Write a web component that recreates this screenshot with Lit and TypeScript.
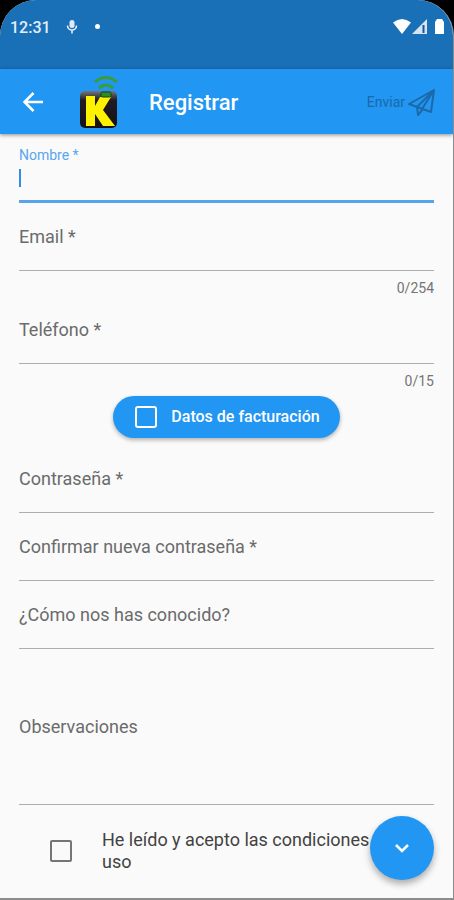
import { LitElement, html, css, nothing } from "lit";
import { customElement, property } from "lit/decorators.js";

@customElement("form-field")
class FormField extends LitElement {
  @property() label = "";
  @property() type = "text";
  @property() counter = "";
  @property({ type: Boolean }) active = false;
  @property({ type: Boolean }) multiline = false;

  static styles = css`
    :host {
      display: block;
    }
    .field {
      display: grid;
      box-sizing: border-box;
      height: 68px;
      border-bottom: 1px solid #adadad;
    }
    .field > * {
      grid-area: 1 / 1;
    }
    .label {
      padding-top: 22px;
      font-size: 18px;
      line-height: 24px;
      color: #6b6b6b;
      white-space: nowrap;
    }
    .input {
      box-sizing: border-box;
      width: 100%;
      min-width: 0;
      margin: 0;
      padding: 22px 0;
      border: 0;
      outline: 0;
      resize: none;
      background: transparent;
      font: inherit;
      font-size: 18px;
      line-height: 24px;
      color: #212121;
    }
    .tall {
      height: 156px;
    }
    .tall .label {
      padding-top: 66px;
    }
    .active {
      border-bottom: 3px solid #56a5ea;
    }
    .active .label {
      padding-top: 12px;
      font-size: 14px;
      line-height: 16px;
      color: #58a6ee;
    }
    .active .input {
      padding: 32px 0 12px;
      caret-color: transparent;
    }
    .caret {
      width: 2px;
      height: 18px;
      margin-top: 34px;
      background: #2f8fe0;
    }
    .counter {
      height: 25px;
      padding-top: 8px;
      box-sizing: border-box;
      text-align: right;
      font-size: 14px;
      line-height: 18px;
      color: #757575;
    }
  `;

  render() {
    return html`
      <div class="field ${this.active ? "active" : ""} ${this.multiline ? "tall" : ""}">
        <label class="label" for="control">${this.label}</label>
        ${this.multiline
          ? html`<textarea class="input" id="control"></textarea>`
          : html`<input class="input" id="control" type=${this.type} />`}
        ${this.active ? html`<span class="caret"></span>` : nothing}
      </div>
      ${this.counter ? html`<div class="counter">${this.counter}</div>` : nothing}
    `;
  }
}

@customElement("app-root")
class AppRoot extends LitElement {
  static styles = css`
    :host {
      display: block;
      background: #000;
      font-family: Roboto, "Liberation Sans", sans-serif;
    }
    .screen {
      position: relative;
      box-sizing: border-box;
      min-height: 100vh;
      overflow: hidden;
      border-right: 1px solid #8c8c8c;
      border-bottom: 2px solid #8c8c8c;
      border-radius: 36px 36px 0 0;
      background: #fafafa;
    }
    .status {
      display: flex;
      align-items: flex-start;
      box-sizing: border-box;
      height: 69px;
      padding: 17px 8px 0 10px;
      background: #1a70b7;
      color: #e4eef7;
    }
    .time {
      font-size: 16px;
      line-height: 22px;
      font-weight: 500;
    }
    .mic {
      margin: 3px 0 0 14px;
    }
    .dot {
      width: 5px;
      height: 5px;
      margin: 7px 0 0 16px;
      border-radius: 50%;
      background: #fff;
    }
    .signals {
      margin: 1px 0 0 auto;
    }
    .bar {
      position: relative;
      display: flex;
      align-items: center;
      box-sizing: border-box;
      height: 65px;
      padding: 0 16px 0 19px;
      background: #2196f3;
      box-shadow: 0 1px 4px rgba(0, 0, 0, 0.45);
      color: #fff;
    }
    svg {
      display: block;
      flex: none;
    }
    button {
      margin: 0;
      padding: 0;
      border: 0;
      background: none;
      font: inherit;
      color: inherit;
    }
    .logo {
      margin-left: 30px;
    }
    .title {
      margin: 0 auto 0 30px;
      padding-top: 2px;
      font-size: 22px;
      line-height: 28px;
      font-weight: 500;
    }
    .send {
      display: flex;
      align-items: center;
      gap: 2px;
      font-size: 14px;
      line-height: 18px;
      color: #1b69a8;
    }
    .form {
      padding: 1px 19px 0;
    }
    .billing {
      display: flex;
      align-items: center;
      gap: 14px;
      width: fit-content;
      height: 42px;
      margin: 7px auto;
      padding: 0 20px 0 22px;
      border-radius: 21px;
      background: #2196f3;
      box-shadow: 0 2px 4px rgba(0, 0, 0, 0.3);
      color: #fff;
      font-size: 16px;
      line-height: 22px;
      font-weight: 500;
    }
    input[type="checkbox"] {
      appearance: none;
      flex: none;
      box-sizing: border-box;
      width: 22px;
      height: 22px;
      margin: 0;
      border: 2px solid #fff;
      border-radius: 3px;
    }
    .terms {
      display: flex;
      align-items: center;
      gap: 30px;
      padding: 24px 20px 24px 31px;
      color: #424242;
      font-size: 18px;
      line-height: 22px;
    }
    .terms input[type="checkbox"] {
      border-color: #757575;
      border-radius: 2px;
    }
    .fab {
      position: absolute;
      right: 19px;
      bottom: 18px;
      display: grid;
      place-items: center;
      width: 64px;
      height: 64px;
      border-radius: 50%;
      background: #2196f3;
      box-shadow: 0 4px 7px rgba(0, 0, 0, 0.32);
      color: #fff;
    }
  `;

  render() {
    return html`
      <div class="screen">
        <div class="status">
          <span class="time">12:31</span>
          <svg class="mic" width="14" height="14" viewBox="0 0 14 14">
            <rect x="4.500" y="0" width="5" height="8" rx="2.500" fill="#dfeaf5" />
            <path d="M2.500 5.500a4.500 4.500 0 0 0 9 0M7 10v3.500" fill="none" stroke="#dfeaf5" stroke-width="1.600" />
          </svg>
          <span class="dot"></span>
          <svg class="signals" width="52" height="17" viewBox="0 0 52 17">
            <path d="M0 4.500Q9 -2.500 18 4.500L9 16Z" fill="#fff" />
            <path d="M19 16L34 1V16Z" fill="#d3e4f3" />
            <path d="M30.500 7v8" stroke="#1a55a0" stroke-width="2" />
            <path d="M42 4l2-3h5l2 3v12h-9Z" fill="#fff" />
          </svg>
        </div>
        <header class="bar">
          <button aria-label="Volver">
            <svg width="28" height="28" viewBox="0 0 28 28" fill="none" stroke="#fff" stroke-width="2.500">
              <path d="M24 14H6M14.500 5L5.500 14L14.500 23" />
            </svg>
          </button>
          <svg class="logo" width="42" height="54" viewBox="0 0 42 54" role="img" aria-label="K">
            <defs>
              <linearGradient id="shine" x1="0" y1="0" x2="0" y2="1">
                <stop offset="0" stop-color="#777" />
                <stop offset="0.25" stop-color="#211c22" />
                <stop offset="1" stop-color="#151015" />
              </linearGradient>
            </defs>
            <rect x="3" y="16" width="37" height="37" rx="5" fill="url(#shine)" />
            <path d="M9 21H18V31L23 22H34L26 35L38 51H26L18 39V51H9Z" fill="#fff200" />
            <rect x="24" y="17" width="10" height="5" rx="1.500" fill="#2f8c2b" stroke="#124512" />
            <path d="M18 7Q29 -2 40 7M22 13Q29 7 36 13" fill="none" stroke="#3c9c36" stroke-width="3" />
          </svg>
          <h1 class="title">Registrar</h1>
          <button class="send">
            Enviar
            <svg width="30" height="30" viewBox="0 0 30 30" fill="none" stroke="currentColor" stroke-width="2" stroke-linejoin="round">
              <path d="M27 3L2 17L10 20L24 25ZM27 3L10 20L11 28L16 22M27 3L15 22" />
            </svg>
          </button>
        </header>
        <main class="form">
          <form-field label="Nombre *" active></form-field>
          <form-field label="Email *" type="email" counter="0/254"></form-field>
          <form-field label="Teléfono *" type="tel" counter="0/15"></form-field>
          <label class="billing"><input type="checkbox" />Datos de facturación</label>
          <form-field label="Contraseña *" type="password"></form-field>
          <form-field label="Confirmar nueva contraseña *" type="password"></form-field>
          <form-field label="¿Cómo nos has conocido?"></form-field>
          <form-field label="Observaciones" multiline></form-field>
          <label class="terms">
            <input type="checkbox" />
            <span>He leído y acepto las condiciones de uso</span>
          </label>
        </main>
        <button class="fab" aria-label="Bajar">
          <svg width="16" height="12" viewBox="0 0 16 12" fill="none" stroke="#fff" stroke-width="2.500">
            <path d="M2 3L8 9L14 3" />
          </svg>
        </button>
      </div>
    `;
  }
}
